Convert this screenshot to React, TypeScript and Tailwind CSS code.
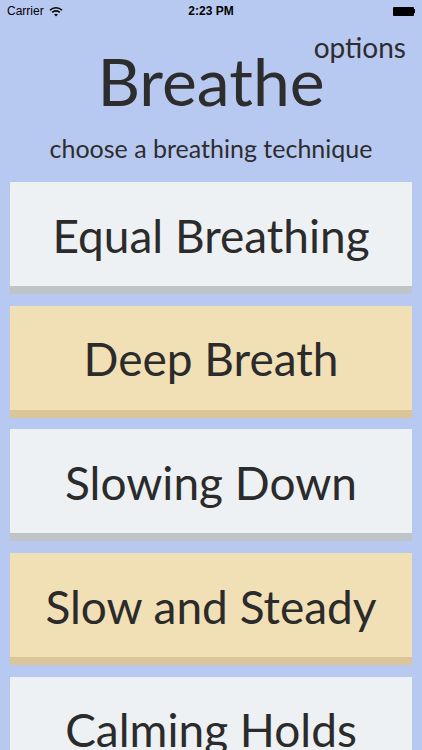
import React from "react";

const items = [
  { label: "Equal Breathing", tone: "light" },
  { label: "Deep Breath", tone: "yellow" },
  { label: "Slowing Down", tone: "light" },
  { label: "Slow and Steady", tone: "yellow" },
  { label: "Calming Holds", tone: "light" },
];

function Wifi() {
  return (
    <svg width="14" height="11" viewBox="0 0 14 11" className="ml-[5px]">
      <path d="M1 4.2 A8.5 8.5 0 0 1 13 4.2" stroke="#000" strokeWidth="1.6" fill="none" />
      <path d="M3.2 6.4 A5.4 5.4 0 0 1 10.8 6.4" stroke="#000" strokeWidth="1.6" fill="none" />
      <path d="M7 10.5 L5.2 8.5 A2.6 2.6 0 0 1 8.8 8.5 Z" fill="#000" />
    </svg>
  );
}

export default function App() {
  return (
    <div className="w-[422px] h-[750px] overflow-hidden bg-[#b8c9f1] flex flex-col" style={{ fontFamily: "Lato, 'Open Sans', sans-serif" }}>
      <div className="h-[22px] shrink-0 flex items-center justify-between px-[7px] relative text-black text-[12px]" style={{ fontFamily: "'Liberation Sans', Arial, sans-serif" }}>
        <div className="flex items-center">
          <span>Carrier</span>
          <Wifi />
        </div>
        <span className="absolute left-1/2 -translate-x-1/2 font-bold">2:23 PM</span>
        <div className="flex items-center">
          <div className="w-[21px] h-[9px] bg-black rounded-[1px]" />
          <div className="w-[1.5px] h-[4px] bg-black" />
        </div>
      </div>
      <div className="relative h-[160px] shrink-0 flex flex-col items-center text-[#2d2d2d]">
        <div className="text-[66px] leading-none mt-[26px]">Breathe</div>
        <div className="absolute right-[16px] top-[11px] text-[28px] leading-none">options</div>
        <div className="text-[25px] leading-none mt-[22px]">choose a breathing technique</div>
      </div>
      <div className="flex flex-col gap-[11.7px] px-[10px]">
        {items.map((it) => (
          <div
            key={it.label}
            className={
              it.tone === "light"
                ? "h-[112px] shrink-0 bg-[#eef1f3] border-b-[8px] border-[#bfc4c9] flex items-center justify-center pt-[3px]"
                : "h-[112px] shrink-0 bg-[#f1dfb5] border-b-[8px] border-[#d9c597] flex items-center justify-center pt-[3px]"
            }
          >
            <span className="text-[46px] leading-none text-[#2b2b2b]">{it.label}</span>
          </div>
        ))}
      </div>
    </div>
  );
}
